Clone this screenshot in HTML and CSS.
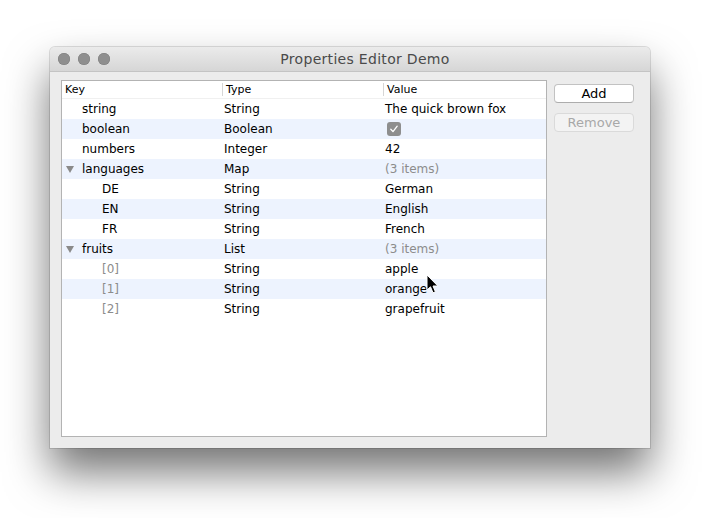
FILE: index.html
```html
<!DOCTYPE html>
<html>
<head>
<meta charset="utf-8">
<link rel="stylesheet" href="styles.css">
</head>
<body>
<div class="stage">
  <div class="window">
    <div class="titlebar">
      <div class="lights"><span class="light"></span><span class="light"></span><span class="light"></span></div>
      <div class="title">Properties Editor Demo</div>
    </div>
    <div class="content">
      <div class="table">
        <div class="head">
          <div class="hcell">Key</div>
          <div class="hcell div">Type</div>
          <div class="hcell div">Value</div>
        </div>
        <div class="row"><div class="key l1">string</div><div class="type">String</div><div class="val">The quick brown fox</div></div>
        <div class="row alt"><div class="key l1">boolean</div><div class="type">Boolean</div><div class="val"><span class="check"><svg width="14" height="14" viewBox="0 0 14 14"><path d="M3.8 7.3 L6 9.6 L10.2 4.2" fill="none" stroke="#fff" stroke-width="1.3" stroke-linecap="round" stroke-linejoin="round"/></svg></span></div></div>
        <div class="row"><div class="key l1">numbers</div><div class="type">Integer</div><div class="val">42</div></div>
        <div class="row alt"><div class="key l0"><span class="tri"></span>languages</div><div class="type">Map</div><div class="val dim">(3 items)</div></div>
        <div class="row"><div class="key l2">DE</div><div class="type">String</div><div class="val">German</div></div>
        <div class="row alt"><div class="key l2">EN</div><div class="type">String</div><div class="val">English</div></div>
        <div class="row"><div class="key l2">FR</div><div class="type">String</div><div class="val">French</div></div>
        <div class="row alt"><div class="key l0"><span class="tri"></span>fruits</div><div class="type">List</div><div class="val dim">(3 items)</div></div>
        <div class="row"><div class="key l2 dim">[0]</div><div class="type">String</div><div class="val">apple</div></div>
        <div class="row alt"><div class="key l2 dim">[1]</div><div class="type">String</div><div class="val">orange</div></div>
        <div class="row"><div class="key l2 dim">[2]</div><div class="type">String</div><div class="val">grapefruit</div></div>
      </div>
      <div class="buttons">
        <div class="btn">Add</div>
        <div class="btn disabled">Remove</div>
      </div>
    </div>
  </div>
  <svg class="cursor" width="14" height="22" viewBox="0 0 14 22"><path d="M1 1 L1 16 L4.5 12.8 L7 18.8 L9.4 17.8 L7 12 L11.8 12 Z" fill="#000" stroke="#fff" stroke-width="1" stroke-linejoin="round"/></svg>
</div>
</body>
</html>
```

FILE: styles.css
```css
html, body {
  margin: 0;
  padding: 0;
  background: #ffffff;
}
body {
  width: 704px;
  height: 518px;
  overflow: hidden;
  font-family: "DejaVu Sans", "Liberation Sans", sans-serif;
  font-size: 12px;
  color: #000;
}
.stage {
  position: relative;
  width: 704px;
  height: 518px;
  padding: 47px 0 0 50px;
  box-sizing: border-box;
}
.window {
  width: 600px;
  height: 401px;
  background: #ececec;
  border-radius: 5px 5px 0 0;
  box-shadow: 0 24px 44px rgba(0,0,0,0.55), 0 0 0 1px rgba(0,0,0,0.12);
  display: flex;
  flex-direction: column;
}
.titlebar {
  height: 24px;
  border-bottom: 1px solid #c4c4c4;
  border-radius: 5px 5px 0 0;
  background: linear-gradient(#ebebeb, #d6d6d6);
  display: flex;
  align-items: center;
  position: relative;
}
.lights {
  display: flex;
  gap: 8px;
  padding-left: 8px;
}
.light {
  width: 12px;
  height: 12px;
  border-radius: 50%;
  background: #8f8f8f;
  box-shadow: inset 0 0 0 0.5px #7d7d7d;
}
.title {
  position: absolute;
  left: 0;
  right: 0;
  padding-left: 30px;
  text-align: center;
  font-size: 14px;
  letter-spacing: 0.3px;
  color: #4a4a4a;
  top: 4px;
}
.content {
  display: flex;
  padding: 8px 0 0 11px;
  gap: 7px;
}
.table {
  width: 484px;
  height: 355px;
  background: #fff;
  border: 1px solid #b3b3b3;
}
.head {
  display: grid;
  grid-template-columns: 160px 161px 161px;
  height: 17px;
  align-items: center;
  font-size: 11px;
  border-bottom: 1px solid #f0f0f0;
}
.hcell {
  padding-left: 3px;
  height: 13px;
  line-height: 13px;
}
.hcell.div {
  border-left: 1px solid #d6d6d6;
}
.row {
  display: grid;
  grid-template-columns: 161px 161px 162px;
  height: 20px;
  align-items: center;
}
.row.alt {
  background: #edf3fe;
}
.key { display: flex; align-items: center; }
.key.l0 { padding-left: 4px; }
.key.l1 { padding-left: 20px; }
.key.l2 { padding-left: 40px; }
.type { padding-left: 1px; }
.val { padding-left: 1px; display: flex; align-items: center; }
.dim { color: #8c8c8c; }
.tri {
  width: 0;
  height: 0;
  border-left: 4px solid transparent;
  border-right: 4px solid transparent;
  border-top: 7px solid #8a8a8a;
  margin-right: 8px;
}
.check {
  width: 14px;
  height: 14px;
  border-radius: 3px;
  background: #8e8e8e;
  display: block;
  margin-left: 2px;
}
.check svg { display: block; }
.buttons {
  display: flex;
  flex-direction: column;
  gap: 10px;
  padding-top: 4px;
}
.btn {
  width: 78px;
  height: 17px;
  line-height: 17px;
  text-align: center;
  font-size: 13px;
  background: #fff;
  border: 1px solid #c2c2c2;
  border-bottom-color: #adadad;
  border-radius: 4px;
}
.btn.disabled {
  background: #f3f3f3;
  color: #a8a8a8;
  border-color: #dadada;
}
.cursor {
  position: absolute;
  left: 426px;
  top: 274px;
}
```
